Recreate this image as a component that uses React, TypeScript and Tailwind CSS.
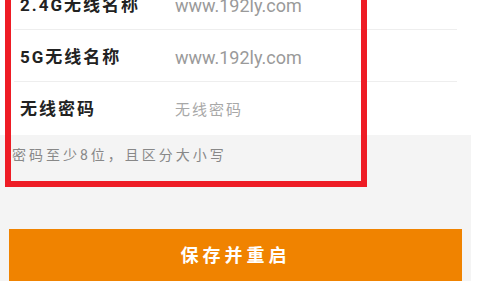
import React from "react";

const cjk = { fontFamily: 'Roboto, "Noto Sans CJK SC", sans-serif' };

function Row({ label, value, placeholder, last }: { label: string; value: string; placeholder?: boolean; last?: boolean }) {
  return (
    <div className="px-[14px] bg-white">
      <div className={`flex items-center h-[52px] pt-[4px] ${last ? "" : "border-b border-[#eeeeee]"}`}>
        <div className="w-[161px] pl-[6px] text-[17px] font-bold text-[#222] tracking-[2px]">{label}</div>
        {placeholder ? (
          <div className="text-[15px] text-[#a8a8a8] tracking-[2px]">{value}</div>
        ) : (
          <div className="text-[18px] text-[#9a9a9a]">{value}</div>
        )}
      </div>
    </div>
  );
}

export default function App() {
  return (
    <div className="relative w-[480px] h-[300px] overflow-hidden bg-white" style={cjk}>
      <div className="w-[471px] bg-[#f4f4f4]">
        <div className="-mt-[22px] bg-white pb-[1px]">
          <Row label="2.4G无线名称" value="www.192ly.com" />
          <Row label="5G无线名称" value="www.192ly.com" />
          <Row label="无线密码" value="无线密码" placeholder last />
        </div>
        <div className="pl-[12px] pt-[10px] h-[94px] text-[14px] text-[#888] tracking-[3px]">
          密码至少8位，且区分大小写
        </div>
        <div className="pl-[9px] pr-[9px]">
          <button className="w-full h-[52px] bg-[#f08300] text-white text-[18px] font-bold tracking-[4px] flex items-center justify-center">
            保存并重启
          </button>
        </div>
      </div>
      <div className="absolute left-[5px] top-[-10px] w-[362px] h-[197px] border-[6px] border-[#ee1c25] pointer-events-none" />
    </div>
  );
}
